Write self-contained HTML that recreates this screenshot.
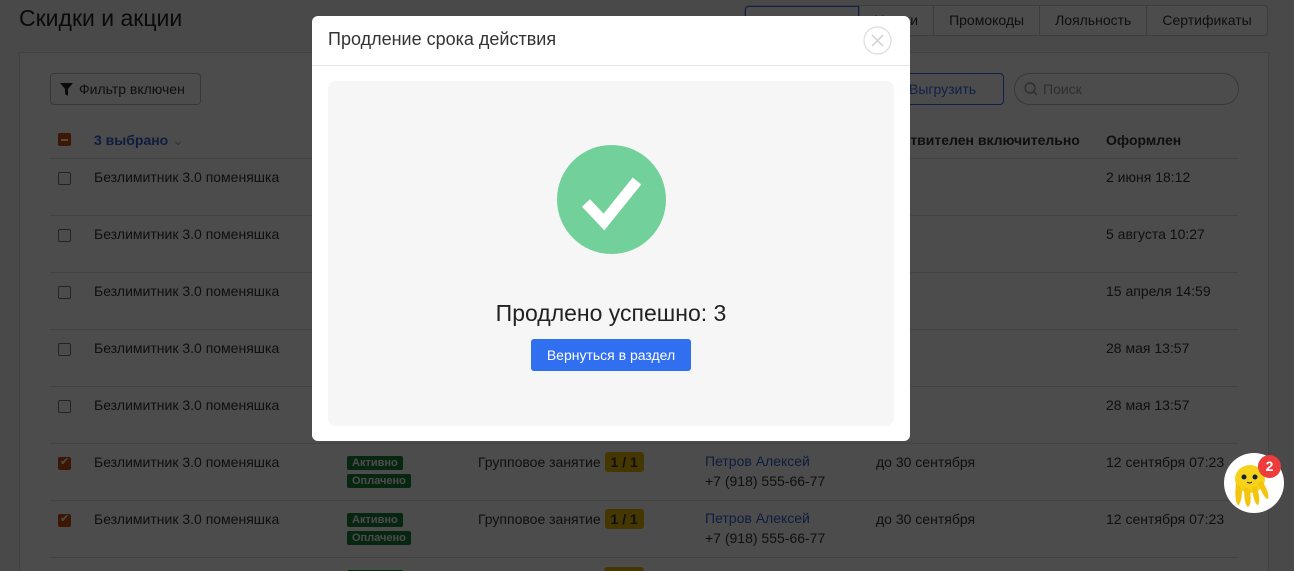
<!DOCTYPE html>
<html><head><meta charset="utf-8">
<style>
*{box-sizing:border-box;margin:0;padding:0}
html,body{width:1294px;height:571px;overflow:hidden}
body{background:#f5f5f5;font-family:"Liberation Sans",sans-serif;color:#333;position:relative;font-size:14px}
.abs{position:absolute}
.title{left:19px;top:5px;font-size:23px;color:#222}
.tabs{left:744px;top:5px;height:31px;display:flex;border:1px solid #ccc;border-radius:4px;background:#fff}
.tabs div{padding:0 15px;line-height:29px;border-left:1px solid #ccc;font-size:14px;color:#333}
.tabs div:first-child{border:1px solid #2f6ff0;width:114px;border-radius:4px 0 0 4px}
.card{left:19px;top:52px;width:1250px;height:519px;background:#fff;border:1px solid #ddd;border-bottom:none}
.btn{top:73px;height:32px;border:1px solid #bbb;border-radius:4px;font-size:14px;line-height:30px;padding-left:28px}
.row{left:50px;width:1188px;height:57px;border-top:1px solid #ddd}
.cb{position:absolute;left:8px;top:13px;width:13px;height:13px;border:1px solid #777;border-radius:2px;background:#fff}
.cb.on{background:#c9530f;border-color:#c9530f}
.t{position:absolute;top:10px;font-size:14px}
.badge{display:block;color:#fff;font-size:11px;font-weight:bold;padding:1px 5px;border-radius:2px;width:max-content;margin-bottom:4px;background:#198038}
.ov{left:0;top:0;width:1294px;height:571px;background:rgba(0,0,0,.7)}
.modal{left:312px;top:16px;width:598px;height:425px;background:#fff;border-radius:6px}
</style></head><body>
<div class="abs title">Скидки и акции</div>
<div class="abs tabs"><div></div><div>Услуги</div><div>Промокоды</div><div>Лояльность</div><div>Сертификаты</div></div>
<div class="abs card"></div>
<div class="abs btn" style="left:50px;width:151px"><svg class="abs" style="left:9px;top:9px" width="13" height="13" viewBox="0 0 13 13"><path d="M0 0H13L8 6V13L5 11V6Z" fill="#222"/></svg>Фильтр включен</div>
<div class="abs btn" style="left:880px;width:124px;border-color:#2f6ff0;color:#2f6ff0">Выгрузить</div>
<div class="abs btn" style="left:1014px;width:225px;border-radius:16px;color:#999">Поиск<svg class="abs" style="left:9px;top:8px" width="14" height="14" viewBox="0 0 14 14"><circle cx="6" cy="6" r="5" fill="none" stroke="#999" stroke-width="1.4"/><path d="M10 10L13 13" stroke="#999" stroke-width="1.4"/></svg></div>
<div class="abs" style="left:50px;top:126px;width:1188px;height:32px">
<div class="cb on" style="top:7px"><div style="position:absolute;left:2px;top:5px;width:7px;height:2px;background:#fff"></div></div>
<div class="t" style="left:44px;top:6px;color:#2f5fd0;font-weight:bold">3 выбрано <span style="color:#aaa;font-weight:normal">⌄</span></div>
<div class="t" style="left:826px;top:6px;font-weight:bold">Действителен включительно</div>
<div class="t" style="left:1056px;top:6px;font-weight:bold">Оформлен</div>
</div>
<div class="abs row" style="top:158px"><div class="cb"></div><div class="t" style="left:44px">Безлимитник 3.0 поменяшка</div><div class="t" style="left:1056px">2 июня 18:12</div></div>
<div class="abs row" style="top:215px"><div class="cb"></div><div class="t" style="left:44px">Безлимитник 3.0 поменяшка</div><div class="t" style="left:1056px">5 августа 10:27</div></div>
<div class="abs row" style="top:272px"><div class="cb"></div><div class="t" style="left:44px">Безлимитник 3.0 поменяшка</div><div class="t" style="left:1056px">15 апреля 14:59</div></div>
<div class="abs row" style="top:329px"><div class="cb"></div><div class="t" style="left:44px">Безлимитник 3.0 поменяшка</div><div class="t" style="left:1056px">28 мая 13:57</div></div>
<div class="abs row" style="top:386px"><div class="cb"></div><div class="t" style="left:44px">Безлимитник 3.0 поменяшка</div><div class="t" style="left:1056px">28 мая 13:57</div></div>
<div class="abs row" style="top:443px"><div class="cb on"><span style="position:absolute;left:1px;top:-3px;color:#fff;font-size:11px">✔</span></div><div class="t" style="left:44px">Безлимитник 3.0 поменяшка</div>
<div style="position:absolute;left:297px;top:12px"><span class="badge">Активно</span><span class="badge">Оплачено</span></div>
<div class="t" style="left:428px">Групповое занятие <span style="background:#e6b800;font-weight:bold;padding:2px 6px;border-radius:3px">1 / 1</span></div>
<div class="t" style="left:655px;line-height:20px;top:7px"><span style="color:#2f5fd0">Петров Алексей</span><br>+7 (918) 555-66-77</div>
<div class="t" style="left:826px">до 30 сентября</div><div class="t" style="left:1056px">12 сентября 07:23</div></div>
<div class="abs row" style="top:500px"><div class="cb on"><span style="position:absolute;left:1px;top:-3px;color:#fff;font-size:11px">✔</span></div><div class="t" style="left:44px">Безлимитник 3.0 поменяшка</div>
<div style="position:absolute;left:297px;top:12px"><span class="badge">Активно</span><span class="badge">Оплачено</span></div>
<div class="t" style="left:428px">Групповое занятие <span style="background:#e6b800;font-weight:bold;padding:2px 6px;border-radius:3px">1 / 1</span></div>
<div class="t" style="left:655px;line-height:20px;top:7px"><span style="color:#2f5fd0">Петров Алексей</span><br>+7 (918) 555-66-77</div>
<div class="t" style="left:826px">до 30 сентября</div><div class="t" style="left:1056px">12 сентября 07:23</div></div>
<div class="abs row" style="top:557px;height:14px;overflow:hidden"><div class="cb on"></div><div style="position:absolute;left:297px;top:12px" class="badge">Активно</div><div class="t" style="left:554px;top:9px;background:#e6b800;width:40px;height:20px;border-radius:3px"></div></div>

<div class="abs ov"></div>

<div class="abs modal">
<div class="abs" style="left:16px;top:13px;font-size:18px;color:#333">Продление срока действия</div>
<svg class="abs" style="left:551px;top:10px" width="29" height="29" viewBox="0 0 29 29"><circle cx="14.5" cy="14.5" r="13.5" fill="none" stroke="#ddd" stroke-width="1.2"/><path d="M9 9L20 20M20 9L9 20" stroke="#ccc" stroke-width="1.3"/></svg>
<div class="abs" style="left:0;top:49px;width:598px;height:1px;background:#e5e5e5"></div>
<div class="abs" style="left:16px;top:65px;width:566px;height:345px;background:#f6f6f7;border-radius:8px"></div>
<svg class="abs" style="left:245px;top:129px" width="109" height="109" viewBox="0 0 109 109"><circle cx="54.5" cy="54.5" r="54.5" fill="#72d19a"/><path d="M29 58L47 77L80 36" fill="none" stroke="#fff" stroke-width="11"/></svg>
<div class="abs" style="left:0;width:598px;top:284px;text-align:center;font-size:23px;color:#222">Продлено успешно: 3</div>
<div class="abs" style="left:219px;top:323px;width:160px;height:32px;background:#2f6ff0;border-radius:3px;color:#fff;font-size:14px;line-height:32px;text-align:center">Вернуться в раздел</div>
</div>

<div class="abs" style="left:1224px;top:453px;width:60px;height:60px;border-radius:50%;background:#fff;overflow:hidden">
<svg width="60" height="60" viewBox="0 0 60 60"><ellipse cx="26" cy="26" rx="15" ry="14" fill="#f7d21a"/><path d="M12 30Q10 48 14 52Q18 50 18 36ZM20 34Q20 52 24 54Q28 52 26 36ZM28 34Q30 52 34 52Q37 48 33 34ZM34 30Q40 46 44 46Q46 40 38 28Z" fill="#f5c40f"/><circle cx="20" cy="24" r="2.5" fill="#123"/><circle cx="31" cy="24" r="2.5" fill="#123"/><path d="M23 29Q25.5 31 28 29" stroke="#123" fill="none"/></svg>
</div>
<div class="abs" style="left:1258px;top:455px;width:23px;height:23px;border-radius:50%;background:#ee3b3b;color:#fff;font-weight:bold;font-size:14px;text-align:center;line-height:23px">2</div>
</body></html>
